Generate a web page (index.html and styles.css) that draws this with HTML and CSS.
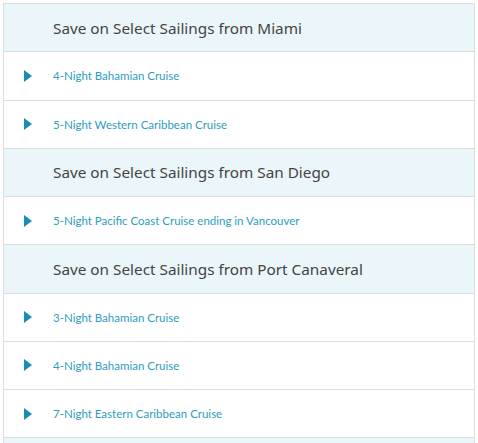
FILE: index.html
```html
<!DOCTYPE html>
<html>
<head>
    <title>Sailings</title>
    <link rel="stylesheet" href="styles.css">
</head>
<body>
    <div class="list">
        <div class="group-title">Save on Select Sailings from Miami</div>
        <div class="item"><span class="arrow"></span><a href="#">4-Night Bahamian Cruise</a></div>
        <div class="item"><span class="arrow"></span><a href="#">5-Night Western Caribbean Cruise</a></div>

        <div class="group-title">Save on Select Sailings from San Diego</div>
        <div class="item"><span class="arrow"></span><a href="#">5-Night Pacific Coast Cruise ending in Vancouver</a></div>

        <div class="group-title">Save on Select Sailings from Port Canaveral</div>
        <div class="item"><span class="arrow"></span><a href="#">3-Night Bahamian Cruise</a></div>
        <div class="item"><span class="arrow"></span><a href="#">4-Night Bahamian Cruise</a></div>
        <div class="item"><span class="arrow"></span><a href="#">7-Night Eastern Caribbean Cruise</a></div>

        <!-- next group starts below the fold -->
        <div class="group-title"></div>
    </div>
</body>
</html>
```

FILE: styles.css
```css
body {
    margin: 0;
    padding: 3px 3px 0 3px;
    background: #fff;
    font-family: Lato, "Noto Sans", sans-serif;
    height: 443px;
    overflow: hidden;
    box-sizing: border-box;
}

.list {
    width: 472px;
    border: 1px solid #d9dee1;
    border-bottom: none;
    box-sizing: border-box;
}

.group-title {
    display: flex;
    align-items: center;
    height: 48.25px;
    padding-left: 49px;
    box-sizing: border-box;
    background: #eaf6f9;
    border-bottom: 1px solid #d9dee1;
    font-family: "Noto Sans", sans-serif;
    font-size: 15.3px;
    color: #444;
}

.item {
    display: flex;
    align-items: center;
    height: 48.25px;
    padding-left: 20px;
    box-sizing: border-box;
    background: #fff;
    border-bottom: 1px solid #d9dee1;
}

.arrow {
    width: 0;
    height: 0;
    border-top: 6px solid transparent;
    border-bottom: 6px solid transparent;
    border-left: 8px solid #1a8db4;
    margin-right: 21px;
}

.item a {
    font-size: 11.5px;
    color: #2e9cc0;
    text-decoration: none;
}
```
